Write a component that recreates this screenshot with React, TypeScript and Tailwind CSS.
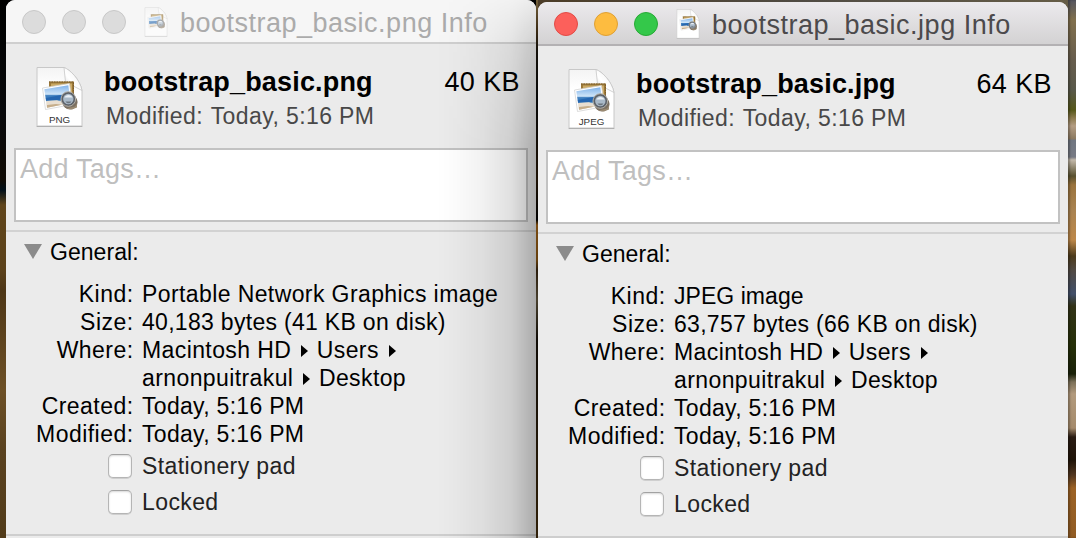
import { ReactNode } from "react";

function FileIcon({ label, className }: { label?: string; className: string }) {
  return (
    <svg viewBox="0 0 47 61" className={className}>
      <defs>
        <linearGradient id="paper" x1="0" y1="0" x2="0" y2="1">
          <stop offset="0" stopColor="#f4f4f4" />
          <stop offset="0.35" stopColor="#ffffff" />
          <stop offset="1" stopColor="#ffffff" />
        </linearGradient>
        <linearGradient id="fold" x1="0" y1="1" x2="1" y2="0">
          <stop offset="0" stopColor="#d4d4d4" />
          <stop offset="0.4" stopColor="#ffffff" />
          <stop offset="1" stopColor="#eeeeee" />
        </linearGradient>
        <linearGradient id="sea" x1="0" y1="0" x2="0" y2="1">
          <stop offset="0" stopColor="#7fb2ea" />
          <stop offset="0.4" stopColor="#cfe5f8" />
          <stop offset="0.46" stopColor="#3f7fc0" />
          <stop offset="0.66" stopColor="#3a7cb8" />
          <stop offset="0.74" stopColor="#f4f0e8" />
          <stop offset="1" stopColor="#d9cdb8" />
        </linearGradient>
      </defs>
      <path d="M1 1H28C34 3 44 13 46 24V59.5H1Z" fill="url(#paper)" stroke="#c8c8c8" strokeWidth="1" />
      <path d="M0.6 60H46.4" stroke="#b0b0b0" strokeWidth="1" />
      <path d="M28 1L29.5 15.5L46 24C44 13 34 3 28 1Z" fill="url(#fold)" stroke="#c6c6c6" strokeWidth="0.8" />
      <path d="M13 15H38V33H13Z" fill="#9b7839" />
      <path d="M15 17H36V31H15Z" fill="#caa964" />
      <path d="M13 15.5H37.5V33" fill="none" stroke="#7a5c2c" strokeWidth="1" strokeDasharray="1.5 1" />
      <path d="M6.5 21.5L33.5 17L36.5 38L9.5 43Z" fill="#ffffff" stroke="#cfcfcf" strokeWidth="0.7" />
      <path d="M8.3 22.8L32.3 18.8L35 36.4L11 41.2Z" fill="url(#sea)" />
      <path d="M9.8 31.5L33 27L33.5 31L24 33.2L10.2 34.2Z" fill="#2566b0" />
      <path d="M10.3 34.5L21 33.8L29 37L11 41.2Z" fill="#e8ded0" />
      <path d="M11 38.5L20 37.5L26 38.2L11 41.2Z" fill="#c5ad8a" />
      <circle cx="34" cy="35.5" r="7.6" fill="#7b7062" />
      <path d="M39 40L41 37V41L36 43L30 42Z" fill="#9a8a72" />
      <circle cx="32.3" cy="32.5" r="7.3" fill="#5c6168" stroke="#b4b0a8" strokeWidth="1" />
      <circle cx="32.3" cy="32.5" r="5.2" fill="#a9b9c8" />
      <path d="M28.3 31C30 27.5 35 27.5 36.6 31Z" fill="#e9eff5" />
      <path d="M29.5 35H35.4C34.5 37.4 30.5 37.4 29.5 35Z" fill="#6d767e" />
      {label && (
        <text x="23.5" y="56.5" textAnchor="middle" fontSize="9.8" fontFamily="Liberation Sans, sans-serif" fill="#333">
          {label}
        </text>
      )}
    </svg>
  );
}

function Row({ label, children }: { label: string; children: ReactNode }) {
  return (
    <div className="flex">
      <div className="w-[127.5px] shrink-0 text-right tracking-[0.45px]">{label}</div>
      <div className="ml-[8.5px] whitespace-nowrap">{children}</div>
    </div>
  );
}

function Crumb() {
  return (
    <svg viewBox="0 0 7 12" className="ml-[10px] mr-[8.5px] inline-block h-3 w-[7px] align-[1px]">
      <path d="M0 0L7 6L0 12Z" fill="#000" />
    </svg>
  );
}

function Check({ label }: { label: string }) {
  return (
    <label className="flex h-9 items-center pl-[102px] text-[#222]">
      <span className="size-6 rounded-[5px] border border-[#b5b5b5] border-t-[#a2a2a2] bg-white shadow-[inset_0_1px_2px_#d8d8d8,0_1px_0_#cfcfcf]" />
      <span className="ml-[10px] tracking-[0.4px]">{label}</span>
    </label>
  );
}

type Info = {
  name: string;
  badge: string;
  total: string;
  kind: string;
  size: string;
  active?: boolean;
};

function InfoWindow({ name, badge, total, kind, size, active }: Info) {
  const lights = active
    ? ["bg-[#fc605b] border-[#e24b46]", "bg-[#fdbc40] border-[#dfa034]", "bg-[#34c84a] border-[#27aa35]"]
    : ["bg-[#dcdcdc] border-[#c8c8c8]", "bg-[#dcdcdc] border-[#c8c8c8]", "bg-[#dcdcdc] border-[#c8c8c8]"];
  return (
    <section className="relative flex h-[540px] w-[530px] shrink-0 flex-col overflow-hidden rounded-t-[9px] bg-[#ebebeb]">
      <header
        className={
          active
            ? "flex h-11 shrink-0 items-center border-b-2 border-[#b3b1b3] bg-linear-to-b from-[#eceaed] to-[#d3d2d3] pl-4"
            : "flex h-11 shrink-0 items-center border-b-2 border-[#cfcfcf] bg-[#f6f6f6] pl-4"
        }
      >
        <div className="flex gap-4">
          {lights.map((c, i) => (
            <span key={i} className={`mt-px size-6 rounded-full border ${c}`} />
          ))}
        </div>
        <FileIcon className={active ? "ml-[18px] mt-px h-[30px] w-6" : "ml-[18px] mt-px h-[30px] w-6 opacity-60"} />
        <h1
          className={
            active
              ? "ml-3 mt-[3px] whitespace-nowrap text-[27px] leading-8 tracking-[0.5px] text-[#4c4a4c]"
              : "ml-3 mt-[3px] whitespace-nowrap text-[27px] leading-8 tracking-[0.5px] text-[#ababab]"
          }
        >
          {name} Info
        </h1>
      </header>

      <div className="flex h-[104px] shrink-0 pl-[30px] pr-4 pt-[22px]">
        <FileIcon label={badge} className="h-[62px] w-[47px] shrink-0" />
        <div className="ml-[21px] flex-1 whitespace-nowrap">
          <div className="flex justify-between text-[27px] leading-8 text-black">
            <b className="tracking-[0.17px]">{name}</b>
            <span className="tracking-[0.4px]">{total}</span>
          </div>
          <div className="ml-[2px] mt-[4px] text-[23px] leading-7 tracking-[0.4px] text-[#484848]">
            Modified: <span className="ml-px">Today, 5:16 PM</span>
          </div>
        </div>
      </div>

      <div className="mx-2 h-[74px] shrink-0 border-2 border-[#c2c2c2] bg-white pl-1 pt-[3px] text-[27px] leading-8 tracking-[0.25px] text-[#bfbfbf]">
        Add Tags…
      </div>

      <div className="mt-2 border-t-2 border-[#d2d2d2] text-[23px] leading-7 text-black">
        <div className="flex h-[48px] items-start pl-[18px] pt-[6px]">
          <svg viewBox="0 0 18 15" className="mt-[6px] h-[15px] w-[18px]">
            <path d="M0 0H18L9 15Z" fill="#8b8b8b" />
          </svg>
          <span className="ml-2 tracking-[0.05px]">General:</span>
        </div>
        <div className="tracking-[0.3px]">
          <Row label="Kind:">
            <span className={active ? "tracking-[0.05px]" : "tracking-[0.4px]"}>{kind}</span>
          </Row>
          <Row label="Size:">{size}</Row>
          <Row label="Where:">
            <span className="tracking-[0.4px]">
              Macintosh HD<Crumb />Users<Crumb />
              <br />
              arnonpuitrakul<Crumb />Desktop
            </span>
          </Row>
          <Row label="Created:">Today, 5:16 PM</Row>
          <Row label="Modified:">Today, 5:16 PM</Row>
        </div>
        <Check label="Stationery pad" />
        <Check label="Locked" />
      </div>
      <div className="mt-[14px] h-[2px] shrink-0 bg-[#cecece]" />

      {!active && (
        <div className="pointer-events-none absolute inset-y-0 right-0 w-[100px] bg-[linear-gradient(to_right,transparent,rgba(0,0,0,.015)_20%,rgba(0,0,0,.05)_45%,rgba(0,0,0,.12)_75%,rgba(0,0,0,.27))] [mask-image:linear-gradient(to_bottom,rgba(0,0,0,.15),rgba(0,0,0,.6)_45px,black_150px)]" />
      )}
    </section>
  );
}

export default function App() {
  return (
    <main className="flex h-[538px] w-[1076px] overflow-hidden bg-[linear-gradient(to_bottom,#000_0,#08090b_110px,#100b05_180px,#02101a_190px,#60451b_205px,#5c421b_270px,#4e3717_290px,#6d5026_390px,#5a4220_450px,#513b19_538px)] font-['Liberation_Sans',sans-serif]">
      <div className="ml-[6px]">
        <InfoWindow name="bootstrap_basic.png" badge="PNG" total="40 KB" kind="Portable Network Graphics image" size="40,183 bytes (41 KB on disk)" />
      </div>
      <div className="h-full w-[2px] bg-[linear-gradient(to_bottom,#75623d,#3c2b14_30px,#15110b_50px,#080808_100px,#1e1205_180px,#000_220px,#7a4b12_225px,#67400e_260px,#2b1d0d_270px,#49412f_300px,#100c06_340px,#302009_538px)]" />
      <div className="h-full bg-linear-to-r from-[#4b3c27] via-[#504b43] to-[#655c46] pt-[2px]">
        <InfoWindow active name="bootstrap_basic.jpg" badge="JPEG" total="64 KB" kind="JPEG image" size="63,757 bytes (66 KB on disk)" />
      </div>
      <div className="h-full flex-1 bg-[linear-gradient(to_bottom,#555660_0,#81704d_20px,#675d4d_60px,#59594b_90px,#56581a_110px,#8c7b4e_118px,#b49d83_126px,#8b7960_139px,#707681_140px,#777a84_157px,#c3b9aa_160px,#59512f_176px,#9b743e_185px,#a98351_210px,#bd884a_240px,#4d3b1c_256px,#514a43_270px,#42506a_294px,#323318_306px,#263009_345px,#1a2109_374px,#7b7058_382px,#b29a7d_394px,#a58b6c_428px,#2a1c13_437px,#201409_460px,#523720_475px,#9c6225_488px,#915c24_538px)] shadow-[inset_2px_0_2px_rgba(0,0,0,.3)]" />
    </main>
  );
}
